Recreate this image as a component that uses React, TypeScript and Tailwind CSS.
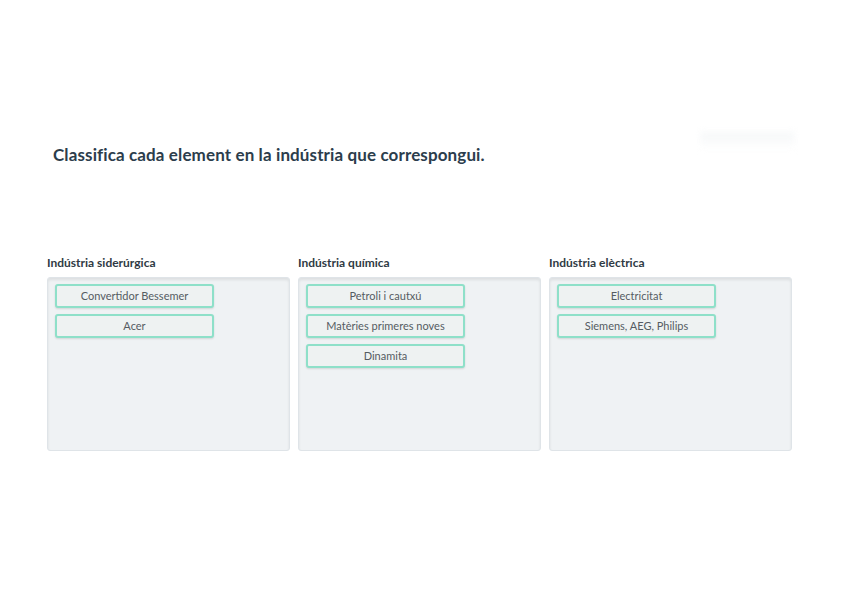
import React from 'react';

type Group = { title: string; items: string[] };

const groups: Group[] = [
  { title: 'Indústria siderúrgica', items: ['Convertidor Bessemer', 'Acer'] },
  { title: 'Indústria química', items: ['Petroli i cautxú', 'Matèries primeres noves', 'Dinamita'] },
  { title: 'Indústria elèctrica', items: ['Electricitat', 'Siemens, AEG, Philips'] },
];

function Bucket({ group }: { group: Group }) {
  return (
    <div className="flex flex-col">
      <div className="text-[12px] font-bold text-[#2f3a44] h-[14px] leading-[14px] mb-[7px]">{group.title}</div>
      <div className="h-[174px] bg-[#eff2f4] border border-[#dfe4e8] rounded-[3px] shadow-[inset_0_2px_3px_rgba(0,0,0,0.08)] px-[7px] pt-[6px] flex flex-col gap-[6px]">
        {group.items.map((it) => (
          <div
            key={it}
            className="w-[159px] h-[24px] flex items-center justify-center bg-[#eef2f2] border-2 border-[#8ee0c9] rounded-[3px] shadow-[0_1px_2px_rgba(0,0,0,0.12)] text-[11px] text-[#555c62]"
          >
            {it}
          </div>
        ))}
      </div>
    </div>
  );
}

export default function App() {
  return (
    <div className="relative w-[848px] h-[599px] bg-white overflow-hidden" style={{ fontFamily: 'Lato, "Open Sans", sans-serif' }}>
      <div className="absolute left-[700px] top-[132px] w-[95px] h-[18px] bg-gradient-to-b from-[#f1f4f6] to-white blur-[3px] opacity-70" />
      <div className="pt-[145px] px-[47px]">
        <h1 className="pl-[6px] text-[17px] tracking-[0.12px] font-bold text-[#2c3d4c] leading-[20px]">
          Classifica cada element en la indústria que correspongui.
        </h1>
        <div className="mt-[91px] grid grid-cols-[243px_243px_243px] gap-[8px]">
          {groups.map((g) => (
            <Bucket key={g.title} group={g} />
          ))}
        </div>
      </div>
    </div>
  );
}
